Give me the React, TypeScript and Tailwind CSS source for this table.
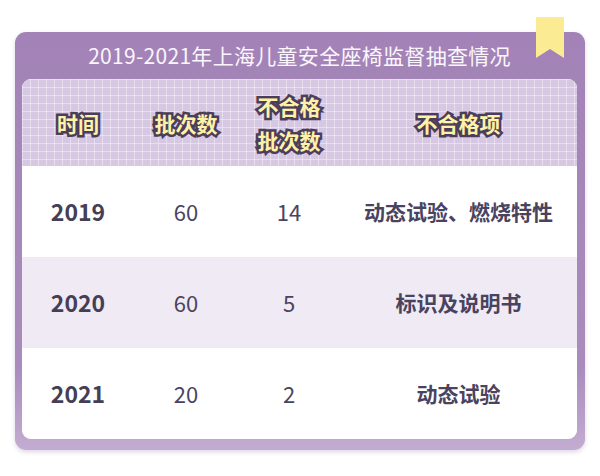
const rows = [
  { year: '2019', batches: '60', failed: '14', items: '动态试验、燃烧特性' },
  { year: '2020', batches: '60', failed: '5', items: '标识及说明书' },
  { year: '2021', batches: '20', failed: '2', items: '动态试验' },
];

const cols = 'grid grid-cols-[112px_104px_102px_1fr]';
const headText =
  'text-[21px] font-bold leading-[34px] text-[#fff1a6] [-webkit-text-stroke:5px_#4b3d5c] [paint-order:stroke_fill]';

function Bookmark() {
  return (
    <svg className="absolute -top-[15px] right-[21px]" width="28" height="41" viewBox="0 0 28 41">
      <polygon points="0,0 28,0 28,41 14,32 0,41" fill="#fbec94" />
    </svg>
  );
}

export default function App() {
  return (
    <div className="w-[600px] h-[476px] bg-white pt-[32px] pl-[15px] font-['Noto_Sans_CJK_SC',sans-serif]">
      <div className="relative w-[570px] rounded-[11px] bg-[linear-gradient(180deg,#a383b7_0%,#a98bbc_80%,#c3acd1_100%)] pl-[7px] pr-[8px] pb-[11px] shadow-[0_2px_4px_rgba(120,90,140,0.25)]">
        <Bookmark />
        <div className="h-[47px] flex items-center justify-center text-[21px] text-[#faf6fc] tracking-[0.3px]">
          2019-2021年上海儿童安全座椅监督抽查情况
        </div>

        <div className="rounded-[9px] overflow-hidden bg-white shadow-[inset_0_-2px_3px_rgba(140,110,160,0.2)]">
          {/* header with grid paper look */}
          <div
            className={`${cols} h-[87px] items-center text-center bg-[#d6c8e2] [background-image:linear-gradient(rgba(255,255,255,0.38)_1px,transparent_1px),linear-gradient(90deg,rgba(255,255,255,0.38)_1px,transparent_1px)] [background-size:8px_8px]`}
          >
            <div className={headText}>时间</div>
            <div className={headText}>批次数</div>
            <div className={headText}>
              不合格
              <br />
              批次数
            </div>
            <div className={headText}>不合格项</div>
          </div>

          {rows.map((r, i) => (
            <div
              key={r.year}
              className={`${cols} h-[91px] items-center text-center text-[#4a4360] ${
                i === 1 ? 'bg-[#efeaf3]' : 'bg-white'
              }`}
            >
              <div className="text-[23px] font-bold text-[#453e57]">{r.year}</div>
              <div className="text-[22px]">{r.batches}</div>
              <div className="text-[22px]">{r.failed}</div>
              <div className="text-[21px] font-bold">{r.items}</div>
            </div>
          ))}
        </div>
      </div>
    </div>
  );
}
